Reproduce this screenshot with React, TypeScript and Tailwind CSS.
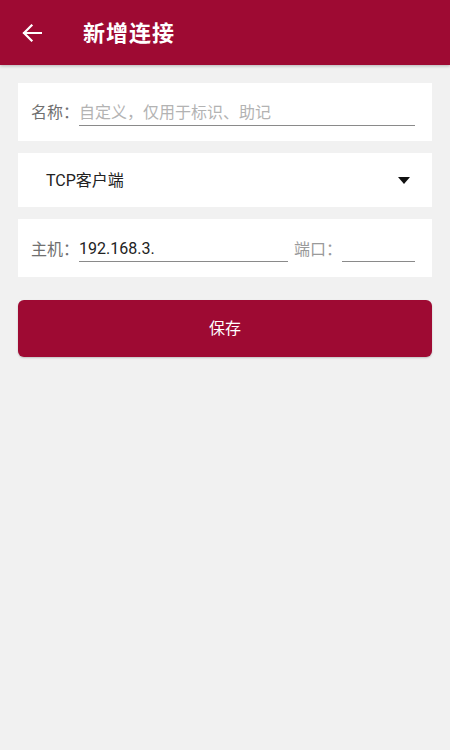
import React from "react";

export default function App() {
  return (
    <div
      className="w-[450px] h-[750px] bg-[#f1f1f1] flex flex-col"
      style={{ fontFamily: 'Roboto, "Noto Sans CJK SC", sans-serif' }}
    >
      <div className="h-[65px] bg-[#9e0a33] flex items-center shadow-[0_1px_3px_rgba(0,0,0,0.25)]">
        <div className="w-[83px] flex items-center pl-[22px]">
          <svg width="20" height="18" viewBox="0 0 20 18" fill="none">
            <path d="M19 9H2M9.5 1.5L2 9l7.5 7.5" stroke="white" strokeWidth="2.2" strokeLinecap="square" />
          </svg>
        </div>
        <span className="text-white text-[22px] font-bold leading-none tracking-[1px] pt-[2px]">新增连接</span>
      </div>

      <div className="px-[18px] pt-[18px] flex flex-col">
        <div className="bg-white h-[58px] flex items-center pl-[13px] pr-[17px]">
          <span className="text-[#707070] text-[16px] w-[48px] shrink-0 pt-[2px]">名称：</span>
          <div className="flex-1 h-[28px] border-b-[1.5px] border-[#8a8a8a] flex items-center pt-[3px]">
            <span className="text-[#b3b3b3] text-[16px]">自定义，仅用于标识、助记</span>
          </div>
        </div>

        <div className="bg-white h-[54px] mt-[12px] flex items-center pl-[28px] pr-[22px]">
          <span className="text-[#222] text-[16px] flex-1 pt-[1px]">TCP客户端</span>
          <svg width="12" height="7" viewBox="0 0 12 7">
            <path d="M0 0h12L6 7z" fill="#111" />
          </svg>
        </div>

        <div className="bg-white h-[58px] mt-[12px] flex items-center pl-[13px] pr-[17px]">
          <span className="text-[#707070] text-[16px] w-[48px] shrink-0 pt-[3px]">主机：</span>
          <div className="w-[209px] h-[28px] border-b-[1.5px] border-[#8a8a8a] flex items-center pt-[3px]">
            <span className="text-[#222] text-[16px]">192.168.3.</span>
          </div>
          <span className="text-[#9a9a9a] text-[16px] ml-[6px] w-[48px] shrink-0 pt-[3px]">端口：</span>
          <div className="flex-1 h-[28px] border-b-[1.5px] border-[#8a8a8a]" />
        </div>

        <button className="mt-[23px] h-[57px] bg-[#9e0a33] rounded-[6px] text-white text-[16px] flex items-center justify-center shadow-[0_1px_2px_rgba(0,0,0,0.2)]">
          保存
        </button>
      </div>
    </div>
  );
}
